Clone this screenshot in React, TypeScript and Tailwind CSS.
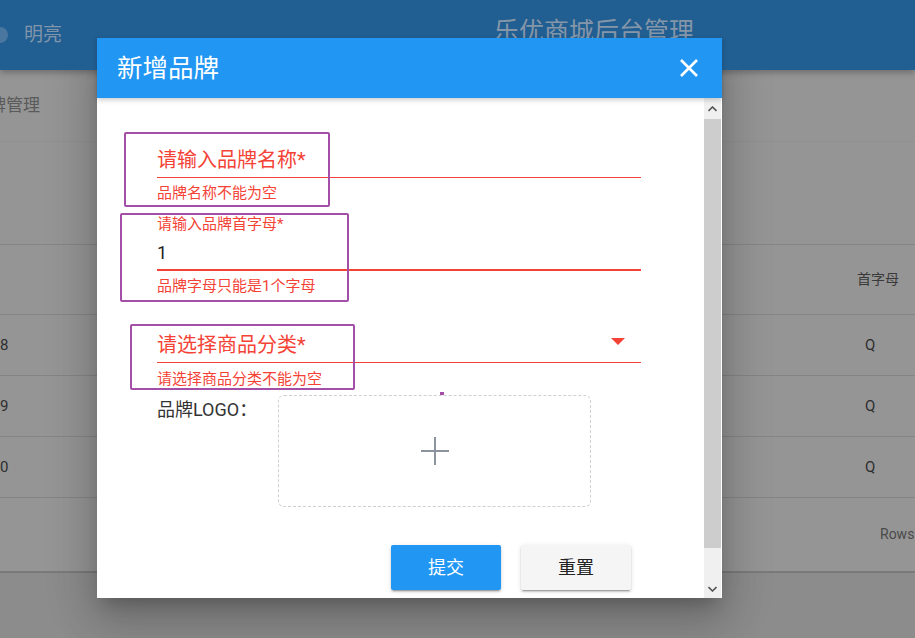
import React from 'react'

const font = "font-['Roboto','Noto_Sans_CJK_SC',sans-serif]"

function Row({ id, letter }: { id: string; letter: string }) {
  return (
    <div className="h-[61px] border-b border-[#858585] flex items-center text-[15px] text-[#2e2e2e]">
      <span className="w-[850px]">{id}</span>
      <span className="pl-[15px]">{letter}</span>
    </div>
  )
}

function Page() {
  return (
    <div className="w-full h-full flex flex-col bg-[#8c8c8c]">
      {/* toolbar */}
      <div className="h-[70px] shrink-0 bg-[#215e91] flex items-center relative z-10 shadow-[0_3px_6px_rgba(0,0,0,0.25)]">
        <div className="w-[16px] h-[16px] rounded-full bg-[#4a77a0] -ml-[8px]" />
        <span className="ml-[16px] text-[19px] text-[#8195ab]">明亮</span>
        <span className="ml-[432px] text-[25px] text-[#8596a9] -mt-[7px]">乐优商城后台管理</span>
      </div>
      <div className="bg-[#959595] flex flex-col">
        <div className="h-[72px] flex items-center border-b border-[#909090]">
          <span className="-ml-[28px] text-[17px] text-[#5a5a5a]">品牌管理</span>
        </div>
        <div className="h-[103px] border-b border-[#858585]" />
        <div className="h-[70px] border-b border-[#858585] flex items-center text-[14px] text-[#3a3a3a]">
          <span className="ml-[857px]">首字母</span>
        </div>
        <Row id="8" letter="Q" />
        <Row id="9" letter="Q" />
        <Row id="0" letter="Q" />
        <div className="h-[75px] flex items-center border-b-2 border-[#7a7a7a] text-[14px] text-[#4a4a4a]">
          <span className="ml-[880px]">Rows</span>
        </div>
      </div>
    </div>
  )
}

function Field({
  label,
  error,
  select,
}: {
  label: string
  error: string
  select?: boolean
}) {
  return (
    <div className="w-[484px]">
      <div className="h-[36px] border-b border-[#f44336] flex items-center justify-between">
        <span className="text-[20px] text-[#f44336]">{label}</span>
        {select && (
          <svg width="14" height="7" viewBox="0 0 14 7" className="mr-[16px] -mt-[6px]">
            <polygon points="0,0 14,0 7,7" fill="#f44336" />
          </svg>
        )}
      </div>
      <div className={`text-[15px] leading-[16px] text-[#f44336] ${select ? 'mt-[8px]' : 'mt-[7px]'}`}>{error}</div>
    </div>
  )
}

function Dialog() {
  return (
    <div className="absolute left-[97px] top-[38px] w-[625px] h-[560px] bg-white flex flex-col shadow-[0_11px_15px_-7px_rgba(0,0,0,0.2),0_24px_38px_3px_rgba(0,0,0,0.14),0_9px_46px_8px_rgba(0,0,0,0.12)]">
      <div className="h-[60px] shrink-0 bg-[#2196f3] flex items-center justify-between pl-[20px] pr-[24px] relative z-10 shadow-[0_2px_5px_rgba(0,0,0,0.2)]">
        <span className="text-[25.5px] text-white">新增品牌</span>
        <svg width="18" height="18" viewBox="0 0 18 18">
          <path d="M1 1 L17 17 M17 1 L1 17" stroke="white" strokeWidth="2.6" />
        </svg>
      </div>
      <div className="flex-1 flex relative overflow-hidden">
        <div className="flex-1 pl-[60px] flex flex-col">
          <div className="mt-[44px]">
            <Field label="请输入品牌名称*" error="品牌名称不能为空" />
          </div>
          <div className="mt-[15px] w-[484px]">
            <div className="text-[15px] leading-[16px] text-[#f44336]">请输入品牌首字母*</div>
            <div className="h-[39px] border-b-2 border-[#f44336] flex items-center pt-[3px] text-[18px] text-[#222]">1</div>
            <div className="mt-[7px] text-[15px] leading-[16px] text-[#f44336]">品牌字母只能是1个字母</div>
          </div>
          <div className="mt-[33px]">
            <Field label="请选择商品分类*" error="请选择商品分类不能为空" select />
          </div>
          <div className="mt-[8px] flex">
            <span className="w-[121px] pt-[5px] text-[18px] leading-[20px] text-[#333]">品牌LOGO：</span>
            <div className="w-[313px] h-[112px] border border-dashed border-[#d0d0d0] rounded-[6px] flex items-center justify-center">
              <svg width="30" height="30" viewBox="0 0 30 30">
                <path d="M15 1 V29 M1 15 H29" stroke="#8c939d" strokeWidth="2" />
              </svg>
            </div>
          </div>
          <div className="mt-[38px] ml-[234px] flex gap-[20px]">
            <button className="w-[110px] h-[45px] rounded-[2px] bg-[#2196f3] text-white text-[18px] shadow-[0_3px_1px_-2px_rgba(0,0,0,0.2),0_2px_2px_0_rgba(0,0,0,0.14),0_1px_5px_0_rgba(0,0,0,0.12)]">
              提交
            </button>
            <button className="w-[110px] h-[45px] rounded-[2px] bg-[#f5f5f5] text-[#222] text-[18px] shadow-[0_3px_1px_-2px_rgba(0,0,0,0.2),0_2px_2px_0_rgba(0,0,0,0.14),0_1px_5px_0_rgba(0,0,0,0.12)]">
              重置
            </button>
          </div>
        </div>
        {/* scrollbar */}
        <div className="w-[17px] shrink-0 bg-[#f0f0f0] flex flex-col mr-[1px]">
          <div className="h-[21px] flex items-center justify-center">
            <svg width="9" height="6" viewBox="0 0 9 6">
              <path d="M0.5 5 L4.5 1 L8.5 5" stroke="#555" strokeWidth="1.6" fill="none" />
            </svg>
          </div>
          <div className="h-[429px] bg-[#cdcdcd]" />
          <div className="flex-1 flex items-end justify-center pb-[6px]">
            <svg width="9" height="6" viewBox="0 0 9 6">
              <path d="M0.5 1 L4.5 5 L8.5 1" stroke="#555" strokeWidth="1.6" fill="none" />
            </svg>
          </div>
        </div>
        {/* annotation boxes */}
        <div className="absolute left-[27px] top-[34px] w-[206px] h-[75px] border-2 border-[#a34fa8] rounded-[2px]" />
        <div className="absolute left-[23px] top-[115px] w-[229px] h-[89px] border-2 border-[#a34fa8] rounded-[2px]" />
        <div className="absolute left-[33px] top-[226px] w-[225px] h-[66px] border-2 border-[#a34fa8] rounded-[2px]" />
        <div className="absolute left-[343px] top-[294px] w-[4px] h-[3px] bg-[#a34fa8]" />
      </div>
    </div>
  )
}

export default function App() {
  return (
    <div className={`relative w-[915px] h-[638px] overflow-hidden ${font}`}>
      <Page />
      <Dialog />
    </div>
  )
}
